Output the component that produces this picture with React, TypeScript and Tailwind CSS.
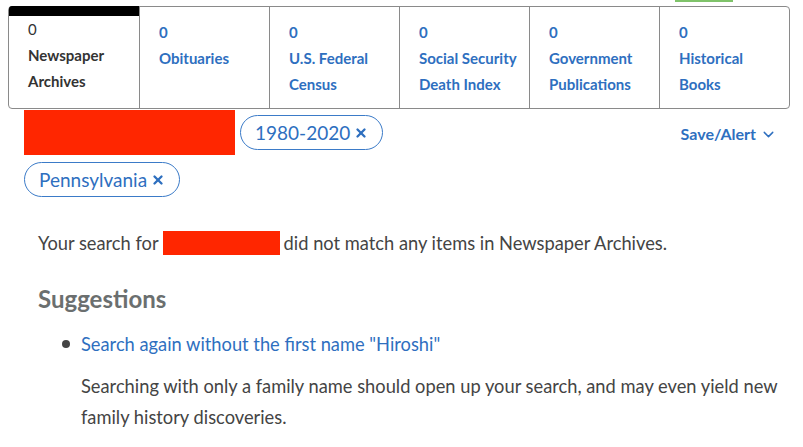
import { X, ChevronDown } from "lucide-react";

interface Tab {
  count: number;
  label: string[];
  active?: boolean;
}

const tabs: Tab[] = [
  { count: 0, label: ["Newspaper", "Archives"], active: true },
  { count: 0, label: ["Obituaries"] },
  { count: 0, label: ["U.S. Federal", "Census"] },
  { count: 0, label: ["Social Security", "Death Index"] },
  { count: 0, label: ["Government", "Publications"] },
  { count: 0, label: ["Historical", "Books"] },
];

function Chip({ children }: { children: string }) {
  return (
    <span className="inline-flex items-center gap-1 h-[35px] px-[14px] rounded-full border border-[#3b7bc8] text-[#2e6fbf] text-[19px] leading-none bg-white">
      {children}
      <X size={14} strokeWidth={4} className="mt-[1px]" />
    </span>
  );
}

export default function App() {
  return (
    <div className="relative bg-white w-[803px] h-[447px] overflow-hidden font-['Lato','Open_Sans',sans-serif] text-[#444]">
      {/* cut-off button above */}
      <div className="absolute left-[675px] top-0 w-[58px] h-[2px] bg-[#7fc36a]" />

      <div className="pl-[8px] pt-[6px] w-[790px]">
        {/* Collection tabs */}
        <div className="grid grid-cols-6 border border-[#8a8a8a] rounded-[4px] h-[103px]">
          {tabs.map((t, i) => (
            <div
              key={t.label.join(" ")}
              className={[
                "relative pl-[19px] text-[15px] font-bold leading-[26px]",
                i > 0 ? "border-l border-[#8a8a8a] pt-[12px] text-[#2e6fbf]" : "pt-[9px] text-[#333]",
              ].join(" ")}
            >
              {t.active && <div className="absolute left-0 right-0 top-[-1px] h-[10px] bg-black rounded-tl-[3px]" />}
              <div className={t.active ? "font-normal" : ""}>{t.count}</div>
              {t.label.map((l) => (
                <div key={l}>{l}</div>
              ))}
            </div>
          ))}
        </div>
      </div>

      {/* Filters */}
      <div className="flex items-start pl-[24px] pr-[26px]">
        <div className="flex flex-wrap items-center gap-x-[5px] gap-y-[7px] w-[400px]">
          <div className="w-[211px] h-[45px] bg-[#ff2600] mt-[1px]" />
          <Chip>1980-2020</Chip>
          <Chip>Pennsylvania</Chip>
        </div>
        <button className="ml-auto mt-[13px] flex items-center gap-[4px] text-[16px] font-bold text-[#2e6fbf]">
          Save/Alert
          <ChevronDown size={17} strokeWidth={2} />
        </button>
      </div>

      {/* No results */}
      <div className="pl-[38px] pt-[34px]">
        <p className="text-[18.3px] leading-[24px] flex items-center">
          Your search for
          <span className="inline-block w-[117px] h-[24px] bg-[#ff2600] mx-[4px]" />
          did not match any items in Newspaper Archives.
        </p>

        <h2 className="mt-[29px] text-[24px] font-bold text-[#6b6f6f] leading-[30px]">Suggestions</h2>

        <ul className="mt-[16px] pl-[22px]">
          <li className="relative pl-[21px]">
            <span className="absolute left-[2px] top-[10px] w-[8px] h-[8px] rounded-full bg-[#444]" />
            <a className="text-[18.3px] leading-[28px] text-[#2e6fbf]">
              Search again without the first name "Hiroshi"
            </a>
            <p className="mt-[13px] text-[18.3px] leading-[31px] w-[705px]">
              Searching with only a family name should open up your search, and may even yield new family history discoveries.
            </p>
          </li>
        </ul>
      </div>
    </div>
  );
}
